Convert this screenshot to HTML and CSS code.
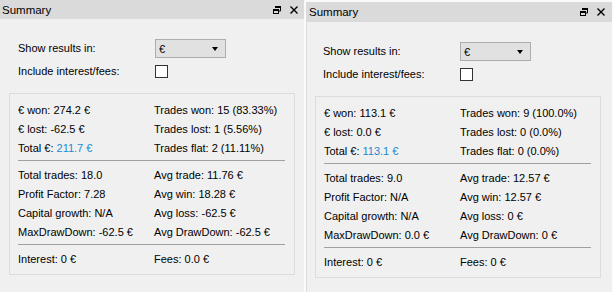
FILE: index.html
```html
<!DOCTYPE html>
<html>
<head>
<meta charset="utf-8">
<link rel="stylesheet" href="styles.css">
</head>
<body>
<div class="screen">
  <section class="dock dock-a">
    <header class="titlebar">
      <span class="title">Summary</span>
      <span class="tools">
        <svg class="ico" width="8" height="8" viewBox="0 0 8 8"><path d="M2.5 0.5h5v4.5h-1.5M2.5 0.5v1.5" fill="none" stroke="#000" stroke-width="1"/><rect x="2" y="0" width="6" height="2" fill="#000"/><rect x="0.5" y="3.5" width="5" height="4" fill="none" stroke="#000"/><rect x="0" y="3" width="6" height="2" fill="#000"/></svg>
        <svg class="ico" width="8" height="8" viewBox="0 0 8 8"><path d="M0.5 0.5L7.5 7.5M7.5 0.5L0.5 7.5" stroke="#000" stroke-width="1.4"/></svg>
      </span>
    </header>
    <div class="body">
      <div class="form">
        <label class="lbl">Show results in:</label>
        <div class="combo"><span>€</span><i class="arrow"></i></div>
        <label class="lbl">Include interest/fees:</label>
        <div class="check"></div>
      </div>
      <div class="group">
        <div class="grid">
          <span>€ won: 274.2 €</span><span>Trades won: 15 (83.33%)</span>
          <span>€ lost: -62.5 €</span><span>Trades lost: 1 (5.56%)</span>
          <span>Total €: <b class="blue">211.7 €</b></span><span>Trades flat: 2 (11.11%)</span>
        </div>
        <hr class="sep">
        <div class="grid">
          <span>Total trades: 18.0</span><span>Avg trade: 11.76 €</span>
          <span>Profit Factor: 7.28</span><span>Avg win: 18.28 €</span>
          <span>Capital growth: N/A</span><span>Avg loss: -62.5 €</span>
          <span>MaxDrawDown: -62.5 €</span><span>Avg DrawDown: -62.5 €</span>
        </div>
        <hr class="sep">
        <div class="grid">
          <span>Interest: 0 €</span><span>Fees: 0.0 €</span>
        </div>
      </div>
    </div>
  </section>
  <section class="dock dock-b">
    <header class="titlebar">
      <span class="title">Summary</span>
      <span class="tools">
        <svg class="ico" width="8" height="8" viewBox="0 0 8 8"><path d="M2.5 0.5h5v4.5h-1.5M2.5 0.5v1.5" fill="none" stroke="#000" stroke-width="1"/><rect x="2" y="0" width="6" height="2" fill="#000"/><rect x="0.5" y="3.5" width="5" height="4" fill="none" stroke="#000"/><rect x="0" y="3" width="6" height="2" fill="#000"/></svg>
        <svg class="ico" width="8" height="8" viewBox="0 0 8 8"><path d="M0.5 0.5L7.5 7.5M7.5 0.5L0.5 7.5" stroke="#000" stroke-width="1.4"/></svg>
      </span>
    </header>
    <div class="body">
      <div class="form">
        <label class="lbl">Show results in:</label>
        <div class="combo"><span>€</span><i class="arrow"></i></div>
        <label class="lbl">Include interest/fees:</label>
        <div class="check"></div>
      </div>
      <div class="group">
        <div class="grid">
          <span>€ won: 113.1 €</span><span>Trades won: 9 (100.0%)</span>
          <span>€ lost: 0.0 €</span><span>Trades lost: 0 (0.0%)</span>
          <span>Total €: <b class="blue">113.1 €</b></span><span>Trades flat: 0 (0.0%)</span>
        </div>
        <hr class="sep">
        <div class="grid">
          <span>Total trades: 9.0</span><span>Avg trade: 12.57 €</span>
          <span>Profit Factor: N/A</span><span>Avg win: 12.57 €</span>
          <span>Capital growth: N/A</span><span>Avg loss: 0 €</span>
          <span>MaxDrawDown: 0.0 €</span><span>Avg DrawDown: 0 €</span>
        </div>
        <hr class="sep">
        <div class="grid">
          <span>Interest: 0 €</span><span>Fees: 0 €</span>
        </div>
      </div>
    </div>
  </section>
</div>
</body>
</html>
```

FILE: styles.css
```css
* { box-sizing: border-box; }
html, body {
  margin: 0;
  padding: 0;
  background: #fafafa;
}
body {
  font-family: "Liberation Sans", Arial, sans-serif;
  font-size: 11px;
  color: #000;
  width: 613px;
  height: 292px;
  overflow: hidden;
}
.screen {
  display: flex;
  align-items: flex-start;
  gap: 2px;
}
.dock {
  background: #f0f0f0;
  height: 292px;
}
.dock-a {
  width: 304px;
}
.dock-b {
  width: 306px;
  margin-top: 2px;
  border-left: 1px solid #dcdcdc;
}
.titlebar {
  height: 19px;
  background: #dadada;
  display: flex;
  align-items: center;
  justify-content: space-between;
  padding: 0 6px 0 2px;
}
.dock-b .titlebar {
  height: 20px;
  padding-right: 7px;
}
.title {
  font-size: 11.5px;
}
.tools {
  display: flex;
  align-items: center;
  gap: 9px;
}
.ico { display: block; }
.body {
  padding: 20px 0 0 9px;
}
.dock-b .body {
  padding-left: 8px;
}
.form {
  display: grid;
  grid-template-columns: 137px auto;
  align-items: center;
  row-gap: 4px;
  padding-left: 9px;
  justify-items: start;
}
.dock-b .form {
  padding-left: 8px;
}
.lbl { line-height: 19px; }
.combo {
  width: 71px;
  height: 19px;
  border: 1px solid #adadad;
  background: #e1e1e1;
  display: flex;
  align-items: center;
  justify-content: space-between;
  padding: 0 7px 0 3px;
}
.arrow {
  width: 0;
  height: 0;
  border-left: 3.5px solid transparent;
  border-right: 3.5px solid transparent;
  border-top: 4px solid #000;
}
.check {
  width: 13px;
  height: 13px;
  border: 1px solid #333;
  background: #fff;
}
.group {
  margin-top: 12px;
  width: 286px;
  height: 182px;
  border: 1px solid #dcdcdc;
  padding: 6px 9px 0 8px;
}
.grid {
  display: grid;
  grid-template-columns: 136px auto;
  grid-auto-rows: 19px;
  align-items: center;
}
.blue {
  font-weight: normal;
  color: #1a8ad4;
}
.sep {
  border: 0;
  border-top: 1px solid #a0a0a0;
  margin: 3px 0 4px;
  height: 0;
}
```
